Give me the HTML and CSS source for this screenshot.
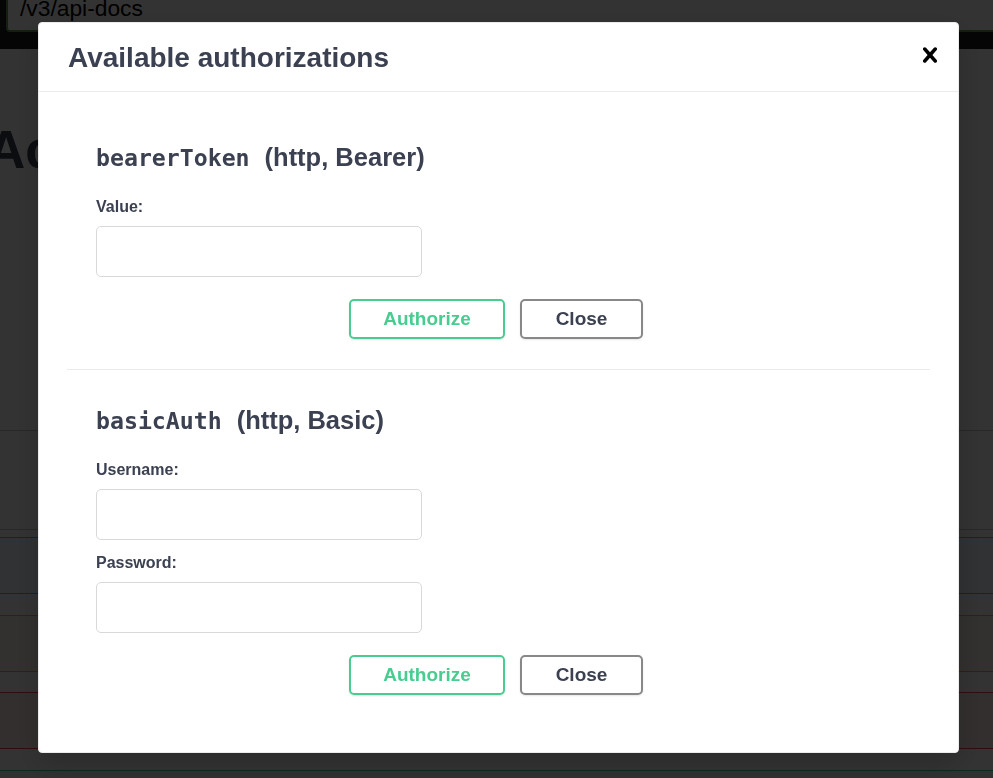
FILE: index.html
```html
<!DOCTYPE html>
<html lang="en">
<head>
<meta charset="utf-8">
<title>Swagger UI - Available authorizations</title>
<link rel="stylesheet" href="styles.css">
</head>
<body>
<div class="page">
  <div class="topbar">
    <div class="url-box">/v3/api-docs</div>
  </div>
  <div class="info">
    <h2 class="page-title">Accounts API</h2>
  </div>
  <div class="tag-header"></div>
  <div class="opblock opblock-get"></div>
  <div class="opblock opblock-put"></div>
  <div class="opblock opblock-delete"></div>
  <div class="opblock opblock-post"></div>
</div>

<div class="backdrop"></div>

<div class="modal">
  <div class="modal-header">
    <h3 class="modal-title">Available authorizations</h3>
    <button class="close-modal" aria-label="Close">
      <svg width="30" height="30" viewBox="0 0 20 20" aria-hidden="true"><path d="M14.348 14.849c-.469.469-1.229.469-1.697 0L10 11.819l-2.651 3.029c-.469.469-1.229.469-1.697 0-.469-.469-.469-1.229 0-1.697l2.758-3.150-2.759-3.152c-.469-.469-.469-1.228 0-1.697.469-.469 1.228-.469 1.697 0L10 8.183l2.651-3.031c.469-.469 1.228-.469 1.697 0 .469.469.469 1.229 0 1.697l-2.758 3.152 2.758 3.150c.469.469.469 1.229 0 1.698z"/></svg>
    </button>
  </div>
  <div class="modal-content">
    <div class="auth-container first">
      <h4 class="auth-title"><code>bearerToken</code><span class="scheme">(http, Bearer)</span></h4>
      <label class="field-label">Value:</label>
      <input class="field-input" type="text">
      <div class="btn-wrapper">
        <button class="btn btn-authorize">Authorize</button>
        <button class="btn btn-close">Close</button>
      </div>
    </div>
    <div class="auth-container last">
      <h4 class="auth-title"><code>basicAuth</code><span class="scheme">(http, Basic)</span></h4>
      <label class="field-label">Username:</label>
      <input class="field-input" type="text">
      <label class="field-label spaced">Password:</label>
      <input class="field-input" type="password">
      <div class="btn-wrapper">
        <button class="btn btn-authorize">Authorize</button>
        <button class="btn btn-close">Close</button>
      </div>
    </div>
  </div>
</div>
</body>
</html>
```

FILE: styles.css
```css
* { box-sizing: border-box; }

html, body {
  margin: 0;
  padding: 0;
  height: 100%;
  overflow: hidden;
  background: #fff;
  font-family: "Liberation Sans", Arial, sans-serif;
}

.page {
  width: 100%;
  overflow: hidden;
}

.topbar {
  height: 49px;
  background: #1b1b1b;
  padding-left: 6px;
  overflow: hidden;
}

.url-box {
  margin-top: -20px;
  margin-right: -60px;
  height: 52px;
  border: 2px solid #62a03f;
  border-radius: 4px;
  background: #fff;
  color: #000;
  font-size: 22.8px;
  line-height: 26px;
  padding: 13px 0 0 12px;
}

.info {
  height: 382px;
  padding-top: 71px;
  border-bottom: 1px solid rgba(59, 65, 81, 0.3);
}

.page-title {
  margin: 0 0 0 -13px;
  font-size: 53px;
  line-height: 60px;
  font-weight: 700;
  color: #3b4151;
  white-space: nowrap;
}

.tag-header {
  height: 99px;
  border-bottom: 1px solid rgba(59, 65, 81, 0.3);
}

.opblock {
  height: 57px;
  border: 1px solid;
  border-radius: 4px;
  margin-top: 21px;
  margin-left: -10px;
  margin-right: -10px;
}
.opblock-get { margin-top: 7px; border-color: #61affe; background: rgba(97, 175, 254, 0.1); }
.opblock-put { border-color: #fca130; background: rgba(252, 161, 48, 0.1); }
.opblock-delete { margin-top: 20px; border-color: #f93e3e; background: rgba(249, 62, 62, 0.1); }
.opblock-post { border-color: #49cc90; background: rgba(73, 204, 144, 0.1); }

.backdrop {
  position: fixed;
  inset: 0;
  background: rgba(0, 0, 0, 0.8);
}

.modal {
  position: fixed;
  left: 38px;
  top: 22px;
  width: 921px;
  background: #fff;
  border: 1px solid #ebebeb;
  border-radius: 4px;
  box-shadow: 0 10px 30px 0 rgba(0, 0, 0, 0.2);
  color: #3b4151;
}

.modal-header {
  height: 69px;
  display: flex;
  align-items: center;
  justify-content: space-between;
  padding: 0 13px 0 29px;
  border-bottom: 1px solid #ebebeb;
}

.modal-title {
  margin: 0;
  padding-top: 1px;
  font-size: 28px;
  font-weight: 700;
  color: #3b4151;
}

.close-modal {
  border: none;
  background: none;
  padding: 0;
  margin-bottom: 5px;
  width: 30px;
  height: 30px;
  display: flex;
  cursor: pointer;
}
.close-modal svg { fill: #000; }

.modal-content {
  padding: 0 28px;
}

.auth-container {
  padding: 50px 28px 30px 29px;
  border-bottom: 1px solid #ebebeb;
}
.auth-container.last {
  padding-top: 35px;
  padding-bottom: 57px;
  border-bottom: none;
}

.auth-title {
  display: flex;
  align-items: baseline;
  margin: 0 0 25px;
  font-size: 25.5px;
  line-height: 30px;
  font-weight: 700;
  color: #3b4151;
  white-space: nowrap;
}
.auth-title code {
  font-family: "DejaVu Sans Mono", "Liberation Mono", monospace;
  font-size: 23.2px;
  line-height: 24px;
  font-weight: 700;
}
.auth-title .scheme {
  margin-left: 15px;
}

.field-label {
  display: block;
  height: 20px;
  font-size: 16px;
  line-height: 20px;
  font-weight: 700;
  color: #3b4151;
  margin-bottom: 9px;
}
.field-label.spaced { margin-top: 13px; }

.field-input {
  display: block;
  width: 326px;
  height: 51px;
  margin: 0;
  border: 1px solid #d9d9d9;
  border-radius: 5px;
  background: #fff;
  padding: 8px 13px;
  font-size: 16px;
  font-family: "Liberation Sans", Arial, sans-serif;
}

.btn-wrapper {
  display: flex;
  justify-content: center;
  gap: 15px;
  margin-top: 22px;
  padding-right: 6px;
}

.btn {
  height: 40px;
  padding: 0;
  border: 2px solid #888;
  border-radius: 5px;
  background: transparent;
  font-family: "Liberation Sans", Arial, sans-serif;
  font-size: 19px;
  font-weight: 700;
  color: #3b4151;
  box-shadow: 0 1px 2px rgba(0, 0, 0, 0.1);
  text-align: center;
  cursor: pointer;
}
.btn-authorize {
  width: 156px;
  border-color: #49cc90;
  color: #49cc90;
}
.btn-close {
  width: 123px;
}
```
